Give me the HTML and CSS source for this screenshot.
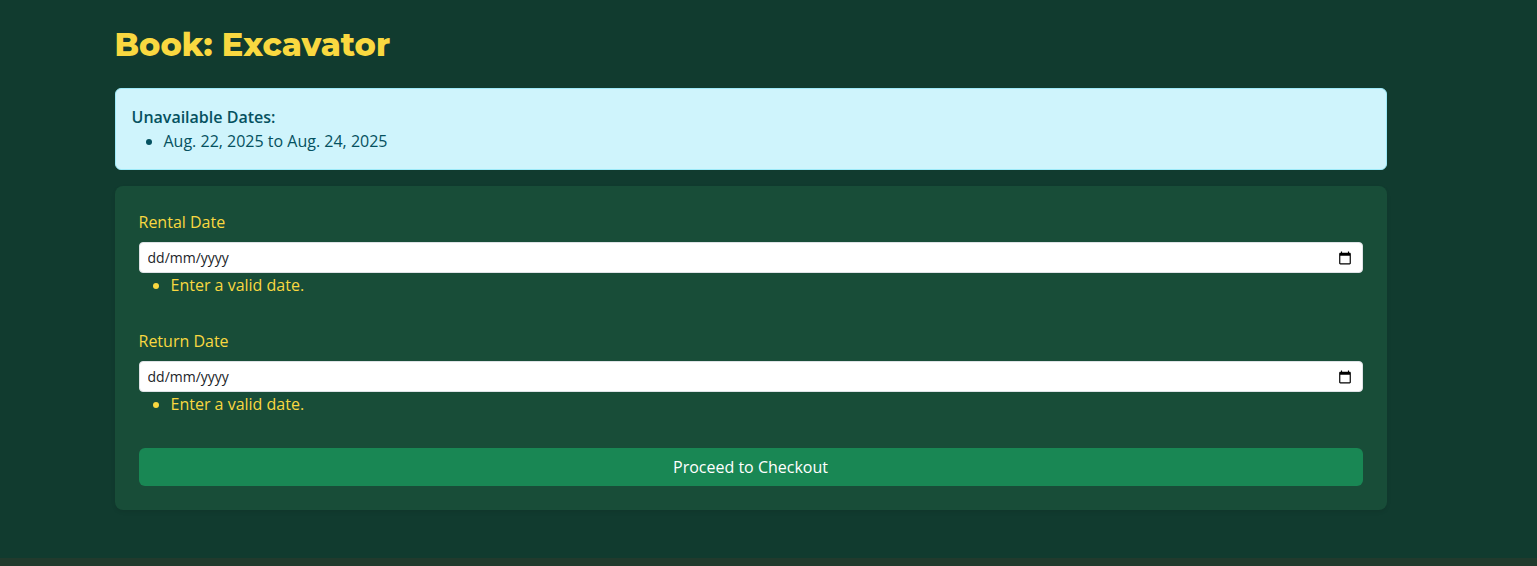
FILE: index.html
```html
<!DOCTYPE html>
<html lang="en-GB">
<head>
<meta charset="utf-8">
<meta name="viewport" content="width=device-width, initial-scale=1">
<title>Book: Excavator</title>
<link rel="stylesheet" href="styles.css">
</head>
<body>
<main class="page">
  <div class="container">
    <h1 class="title">Book: Excavator</h1>
    <section class="notice">
      <strong class="notice-title">Unavailable Dates:</strong>
      <ul class="list">
        <li>Aug. 22, 2025 to Aug. 24, 2025</li>
      </ul>
    </section>
    <form class="card">
      <div class="field">
        <label class="label" for="rental-date">Rental Date</label>
        <div class="control">
          <input class="input" id="rental-date" type="text" placeholder="dd/mm/yyyy">
          <button class="picker" type="button" aria-label="Choose rental date">
            <svg class="icon" viewBox="0 0 24 24" aria-hidden="true"><path d="M20 3h-1V1h-2v2H7V1H5v2H4c-1.100 0-2 .9-2 2v16c0 1.100.9 2 2 2h16c1.100 0 2-.9 2-2V5c0-1.100-.9-2-2-2zm0 18H4V8h16v13z"/></svg>
          </button>
        </div>
        <ul class="list">
          <li>Enter a valid date.</li>
        </ul>
      </div>
      <div class="field">
        <label class="label" for="return-date">Return Date</label>
        <div class="control">
          <input class="input" id="return-date" type="text" placeholder="dd/mm/yyyy">
          <button class="picker" type="button" aria-label="Choose return date">
            <svg class="icon" viewBox="0 0 24 24" aria-hidden="true"><path d="M20 3h-1V1h-2v2H7V1H5v2H4c-1.100 0-2 .9-2 2v16c0 1.100.9 2 2 2h16c1.100 0 2-.9 2-2V5c0-1.100-.9-2-2-2zm0 18H4V8h16v13z"/></svg>
          </button>
        </div>
        <ul class="list">
          <li>Enter a valid date.</li>
        </ul>
      </div>
      <button class="submit" type="submit">Proceed to Checkout</button>
    </form>
  </div>
</main>
<footer class="footer"></footer>
</body>
</html>
```
FILE: styles.css
```css
* {
  box-sizing: border-box;
}

body {
  margin: 0;
  min-height: 100vh;
  display: flex;
  flex-direction: column;
  background: #113b2f;
  color: #f9d840;
  font-family: "Open Sans", "Noto Sans", sans-serif;
  font-size: 16px;
  line-height: 24px;
}

.page {
  padding: 24px 36px 48px 0;
}

.container {
  max-width: 1320px;
  margin: 0 auto;
  padding: 0 24px;
}

.title {
  margin: 0 0 22px;
  font-family: Montserrat, Inter, sans-serif;
  font-size: 32px;
  font-weight: 800;
  line-height: 42px;
}

.notice {
  margin-bottom: 16px;
  padding: 16px;
  border: 1px solid #9eeaf9;
  border-radius: 6px;
  background: #cff4fc;
  color: #055160;
}

.notice-title {
  font-weight: 600;
}

.list {
  margin: 0;
  padding-left: 32px;
}

.card {
  padding: 24px;
  border-radius: 8px;
  background: #184d38;
  box-shadow: 0 2px 4px rgba(0, 0, 0, 0.08);
}

.field {
  margin-bottom: 32px;
}

.label {
  display: block;
  margin-bottom: 8px;
}

.control {
  display: flex;
  align-items: center;
  padding: 4px 8px;
  border: 1px solid #dee2e6;
  border-radius: 4px;
  background: #fff;
}

.input {
  flex: 1;
  min-width: 0;
  height: 21px;
  padding: 0;
  border: 0;
  outline: 0;
  background: transparent;
  color: #212529;
  font: inherit;
  font-size: 14px;
}

.input::placeholder {
  color: #212529;
  opacity: 1;
}

.picker {
  display: flex;
  padding: 2px;
  border: 0;
  background: transparent;
}

.icon {
  width: 14px;
  height: 14px;
  fill: #000;
}

.submit {
  display: block;
  width: 100%;
  padding: 7px 12px;
  border: 0;
  border-radius: 6px;
  background: #198754;
  color: #fff;
  font: inherit;
}

.footer {
  flex: 1;
  min-height: 8px;
  background: #213a2d;
}
```
